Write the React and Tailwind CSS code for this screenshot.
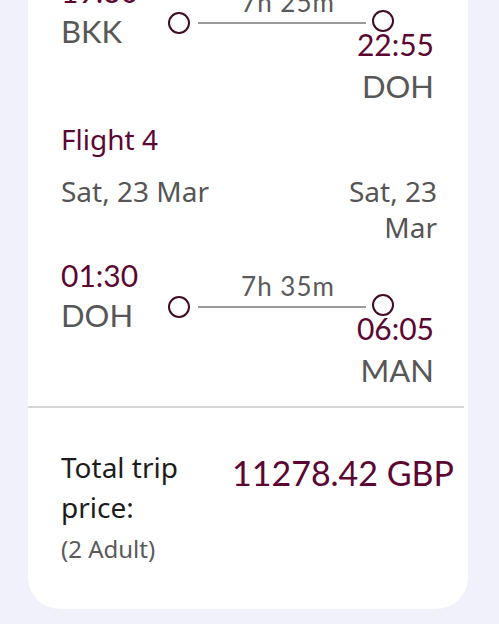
import React from "react";

const maroon = "text-[#5c0632]";

function Circle({ extra = "" }) {
  return (
    <div
      className={`w-[22px] h-[22px] shrink-0 rounded-full border-2 border-[#3f0c26] bg-white ${extra}`}
    />
  );
}

function Segment({ dep, from, dur, arr, to }) {
  return (
    <div className="flex">
      <div className="w-[107px] shrink-0 font-['Lato',sans-serif]">
        <div className={`text-[30px] leading-[40px] ${maroon}`}>{dep}</div>
        <div className="text-[31px] leading-[40px] text-[#575757]">{from}</div>
      </div>
      <div className="flex-1 flex flex-col font-['Lato',sans-serif]">
        <div className="mt-[16px] pl-[14px] pr-[43px] text-center text-[26px] tracking-[1px] leading-[30px] text-[#5a5a5a]">
          {dur}
        </div>
        <div className="-mt-[7px] flex items-center pr-[43px]">
          <Circle />
          <div className="flex-1 h-[2px] bg-[#9a9a9a] ml-[8px] mr-[6px]" />
          <Circle extra="mb-[4px]" />
        </div>
        <div className={`-mt-[6px] pr-[3px] text-right text-[30px] leading-[28px] ${maroon}`}>
          {arr}
        </div>
        <div className="mt-[8px] pr-[3px] text-right text-[31px] leading-[40px] text-[#575757]">
          {to}
        </div>
      </div>
    </div>
  );
}

export default function App() {
  return (
    <div className="min-h-[624px] bg-[#f0f1fb] overflow-hidden font-['Noto_Sans',sans-serif]">
      <div className="-mt-[53px] ml-[28px] w-[440px] bg-white rounded-b-[32px] pt-[24px] pl-[33px] pb-[44px]">
        <div className="pr-[31px]">
          <Segment dep="19:30" from="BKK" dur="7h 25m" arr="22:55" to="DOH" />
          <div className={`mt-[13px] text-[28px] leading-[40px] ${maroon}`}>Flight 4</div>
          <div className="mt-[14px] flex justify-between text-[28px] leading-[36px] text-[#555555]">
            <div>Sat, 23 Mar</div>
            <div className="w-[110px] text-right">Sat, 23 Mar</div>
          </div>
          <div className="mt-[10px]">
            <Segment dep="01:30" from="DOH" dur="7h 35m" arr="06:05" to="MAN" />
          </div>
        </div>
        <div className="mt-[16px] -ml-[33px] mr-[4px] h-[2px] bg-[#d6d6d6]" />
        <div className="mt-[39px] flex">
          <div className="w-[171px] shrink-0">
            <div className="text-[28px] leading-[40px] text-[#1c1c1c]">
              Total trip
              <br />
              price:
            </div>
            <div className="mt-[6px] text-[24px] leading-[32px] text-[#5a5a5a]">(2 Adult)</div>
          </div>
          <div className={`mt-[6px] font-['Lato',sans-serif] text-[34px] leading-[40px] whitespace-nowrap ${maroon}`}>
            11278.42 GBP
          </div>
        </div>
      </div>
    </div>
  );
}
